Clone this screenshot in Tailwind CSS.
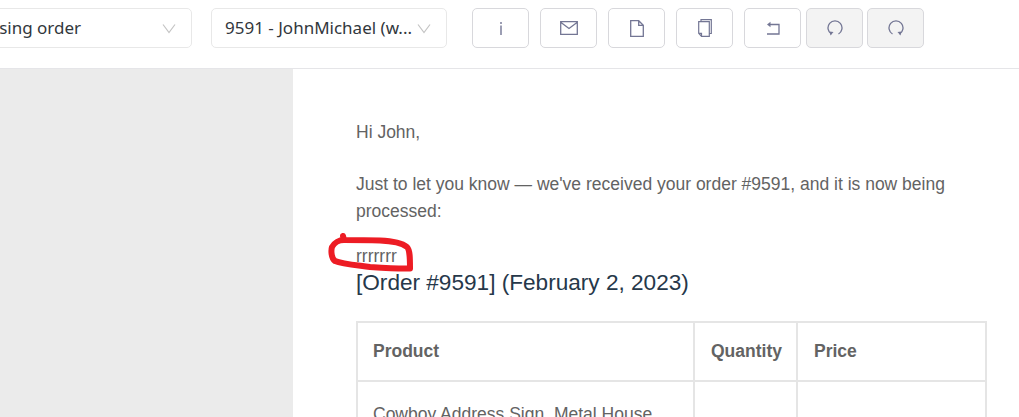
<!DOCTYPE html>
<html lang="en">
<head>
  <meta charset="UTF-8" />
  <meta name="viewport" content="width=device-width, initial-scale=1" />
  <title>Order email preview</title>
  <script src="https://cdn.jsdelivr.net/npm/@tailwindcss/browser@4"></script>
</head>
<body class="bg-white h-[417px] w-[1019px] overflow-hidden relative">

  <!-- Toolbar -->
  <header class="flex items-start h-[69px] pt-2 border-b border-[#e5e5e8] font-['Noto_Sans',sans-serif] text-[#32373c]">
    <div class="shrink-0 w-[192px] h-10 overflow-hidden flex justify-end">
      <div class="shrink-0 w-[260px] h-10 flex items-center justify-between pl-[13px] pr-[15px] bg-white border border-[#e8e8e8] rounded-[5px] text-[17px]">
        <span>Processing order</span>
        <svg class="w-[14px] h-[14px] text-[#c4c4c4]" fill="none" stroke="currentColor" stroke-width="1.2" viewBox="0 0 14 14"><path d="M1 3.500l6 8 6-8" /></svg>
      </div>
    </div>
    <div class="shrink-0 ml-[19px] w-[236px] h-10 flex items-center justify-between pl-[13px] pr-[15px] bg-white border border-[#e8e8e8] rounded-[5px] text-[17px] whitespace-nowrap">
      <span>9591 - JohnMichael (w...</span>
      <svg class="shrink-0 w-[14px] h-[14px] text-[#c4c4c4]" fill="none" stroke="currentColor" stroke-width="1.2" viewBox="0 0 14 14"><path d="M1 3.500l6 8 6-8" /></svg>
    </div>

    <div class="flex ml-[25px] gap-[11px] text-[#737694]">
      <button class="w-[57px] h-10 flex items-center justify-center border border-[#d8d8dc] rounded-[5px] bg-white">
        <svg class="w-4 h-4" fill="none" stroke="currentColor" viewBox="0 0 16 16"><path stroke-width="1.4" d="M8 2v2M8 5.500V15" /></svg>
      </button>
      <button class="w-[57px] h-10 flex items-center justify-center border border-[#d8d8dc] rounded-[5px] bg-white">
        <svg class="w-[18px] h-[14px]" fill="none" stroke="currentColor" stroke-width="1.3" viewBox="0 0 18 14"><path d="M.7.7h16.600v12.600H.7zM1 1.500l8 6 8-6" /></svg>
      </button>
      <button class="w-[57px] h-10 flex items-center justify-center border border-[#d8d8dc] rounded-[5px] bg-white">
        <svg class="w-[14px] h-[17px]" fill="none" stroke="currentColor" stroke-width="1.3" viewBox="0 0 14 17"><path d="M.7.7h8l4.600 4.600v11H.7zM8.700.7v4.600h4.600" /></svg>
      </button>
      <button class="w-[57px] h-10 flex items-center justify-center border border-[#d8d8dc] rounded-[5px] bg-white">
        <svg class="w-[14px] h-[18px]" fill="none" stroke="currentColor" stroke-width="1.2" viewBox="0 0 14 18"><path d="M3 2.500V.7h10.300v13.800h-2M.7 2.700h10.600v14.600H3.500L.7 14.300zM.7 14.300h2.800v3" /></svg>
      </button>
      <button class="w-[57px] h-10 flex items-center justify-center border border-[#d8d8dc] rounded-[5px] bg-white">
        <svg class="w-[14px] h-[14px]" fill="none" stroke="currentColor" stroke-width="1.3" viewBox="0 0 14 14"><path d="M3 3.500h10v9.500H1" /><path fill="currentColor" stroke="none" d="M1 3.500L4.500.7v5.600z" /></svg>
      </button>
      <div class="flex gap-[4px] -ml-[6px]">
        <button class="w-[57px] h-10 flex items-center justify-center border border-[#d8d8dc] rounded-[5px] bg-[#f3f3f3]">
          <svg class="w-4 h-4" fill="none" stroke="currentColor" stroke-width="1.3" viewBox="0 0 16 16"><path d="M4.500 14A7 7 0 1 1 11.500 14" /><path fill="currentColor" stroke="none" d="M2.500 11.500l4 .5-3 3.500z" /></svg>
        </button>
        <button class="w-[57px] h-10 flex items-center justify-center border border-[#d8d8dc] rounded-[5px] bg-[#f3f3f3]">
          <svg class="w-4 h-4" fill="none" stroke="currentColor" stroke-width="1.3" viewBox="0 0 16 16"><path d="M11.500 14A7 7 0 1 0 4.500 14" /><path fill="currentColor" stroke="none" d="M13.500 11.500l-4 .5 3 3.500z" /></svg>
        </button>
      </div>
    </div>
  </header>

  <!-- Preview area -->
  <main class="flex h-[348px] overflow-hidden">
    <aside class="w-[293px] shrink-0 bg-[#ebebeb]"></aside>
    <section class="pl-[63px] pr-[32px] pt-[50px] flex-1 font-['Liberation_Sans',sans-serif] text-[17.5px] leading-[27px] text-[#636363]">
      <p class="mb-[25px]">Hi John,</p>
      <p class="mb-[21px]">Just to let you know — we've received your order #9591, and it is now being processed:</p>
      <p class="leading-[20px]">rrrrrrr</p>
      <h2 class="text-[22.6px] leading-[34px] mb-[21px] text-[#26384a]">[Order #9591] (February 2, 2023)</h2>
      <table class="w-[631px] border-collapse border-2 border-[#e5e5e5] table-fixed">
        <thead>
          <tr class="h-[59px]">
            <th class="w-[337px] border-2 border-[#e5e5e5] px-[15px] text-left font-bold">Product</th>
            <th class="w-[103px] border-2 border-[#e5e5e5] px-4 text-left font-bold">Quantity</th>
            <th class="border-2 border-[#e5e5e5] px-4 text-left font-bold">Price</th>
          </tr>
        </thead>
        <tbody>
          <tr class="h-[100px]">
            <td class="border-2 border-[#e5e5e5] px-[15px] pt-[19px] align-top whitespace-nowrap">Cowboy Address Sign, Metal House</td>
            <td class="border-2 border-[#e5e5e5]"></td>
            <td class="border-2 border-[#e5e5e5]"></td>
          </tr>
        </tbody>
      </table>
    </section>
  </main>

  <!-- Red hand-drawn annotation over the screenshot -->
  <svg class="absolute left-0 top-0 pointer-events-none" width="1019" height="417" fill="none" stroke="#ed1c24" stroke-width="6" stroke-linecap="round" stroke-linejoin="round">
    <path d="M343 236L344 240C352 240 365 240 380 240.500C392 241 402 243 407 247C410 250 410 258 410 268.500C400 269 385 268 370 267C355 265 342 264 335 261C331 258 331 250 332 247C334 243 339 240 344 240" />
  </svg>
</body>
</html>
